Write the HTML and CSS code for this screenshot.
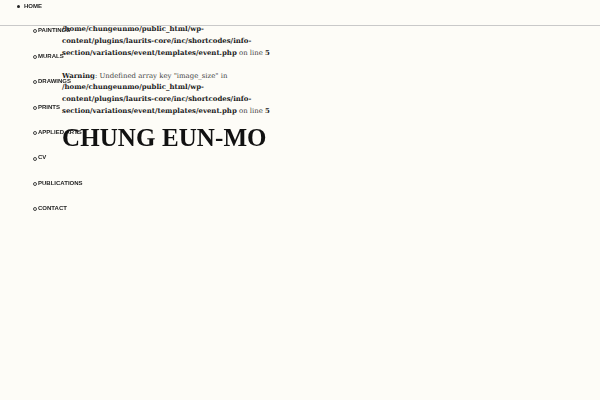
FILE: index.html
```html
<!DOCTYPE html>
<html lang="en">
<head>
<meta charset="utf-8">
<title>Chung Eun-Mo</title>
<link rel="stylesheet" href="styles.css">
</head>
<body>
<header class="site-header">
  <ul class="menu">
    <li class="menu-item">HOME
      <ul class="sub-menu">
        <li>PAINTINGS</li>
        <li>MURALS</li>
        <li>DRAWINGS</li>
        <li>PRINTS</li>
        <li>APPLIED ARTS</li>
        <li>CV</li>
        <li>PUBLICATIONS</li>
        <li>CONTACT</li>
      </ul>
    </li>
  </ul>
</header>
<main class="content">
  <p class="warn"><b>Warning</b>: Undefined array key "image_size" in <b>/home/chungeunmo/public_html/wp-content/plugins/laurits-core/inc/shortcodes/info-section/variations/event/templates/event.php</b> on line <b>5</b></p>
  <p class="warn"><b>Warning</b>: Undefined array key "image_size" in <b>/home/chungeunmo/public_html/wp-content/plugins/laurits-core/inc/shortcodes/info-section/variations/event/templates/event.php</b> on line <b>5</b></p>
  <h1 class="title">CHUNG EUN-MO</h1>
</main>
</body>
</html>
```
FILE: styles.css
```css
html, body {
  margin: 0;
  padding: 0;
  background: #fdfcf7;
}
body {
  font-family: "DejaVu Serif", serif;
  color: #333;
}
.site-header {
  position: fixed;
  top: 0;
  left: 0;
  right: 0;
  height: 25px;
  background: #fdfcf7;
  border-bottom: 1px solid #c9c9c9;
  z-index: 2;
}
.menu {
  margin: 0;
  padding: 0 0 0 24px;
  list-style: none;
  font-family: "Liberation Sans", sans-serif;
  font-size: 6px;
  font-weight: bold;
  color: #222;
  line-height: 12px;
}
.menu li {
  position: relative;
}
.menu-item::before {
  content: "";
  position: absolute;
  left: -7px;
  top: 4.5px;
  width: 3px;
  height: 3px;
  border-radius: 50%;
  background: #222;
}
.sub-menu {
  margin: 6.3px 0 0;
  padding: 0 0 0 14px;
  list-style: none;
}
.sub-menu li {
  line-height: 25.4px;
}
.sub-menu li::before {
  content: "";
  position: absolute;
  left: -5.5px;
  top: 11.2px;
  width: 2px;
  height: 2px;
  border-radius: 50%;
  border: 0.8px solid #444;
}
.content {
  padding: 12.5px 0 0 62px;
  width: 212px;
}
.warn {
  margin: 0 0 11.2px;
  font-size: 6.95px;
  line-height: 11.7px;
  color: #444;
}
.warn b {
  color: #222;
  line-height: 0;
}
.title {
  position: relative;
  z-index: 3;
  margin: -4.35px 0 0;
  font-family: "Liberation Serif", serif;
  font-weight: bold;
  font-size: 25px;
  letter-spacing: 0.1px;
  line-height: 1.15;
  color: #111;
  white-space: nowrap;
}
```
